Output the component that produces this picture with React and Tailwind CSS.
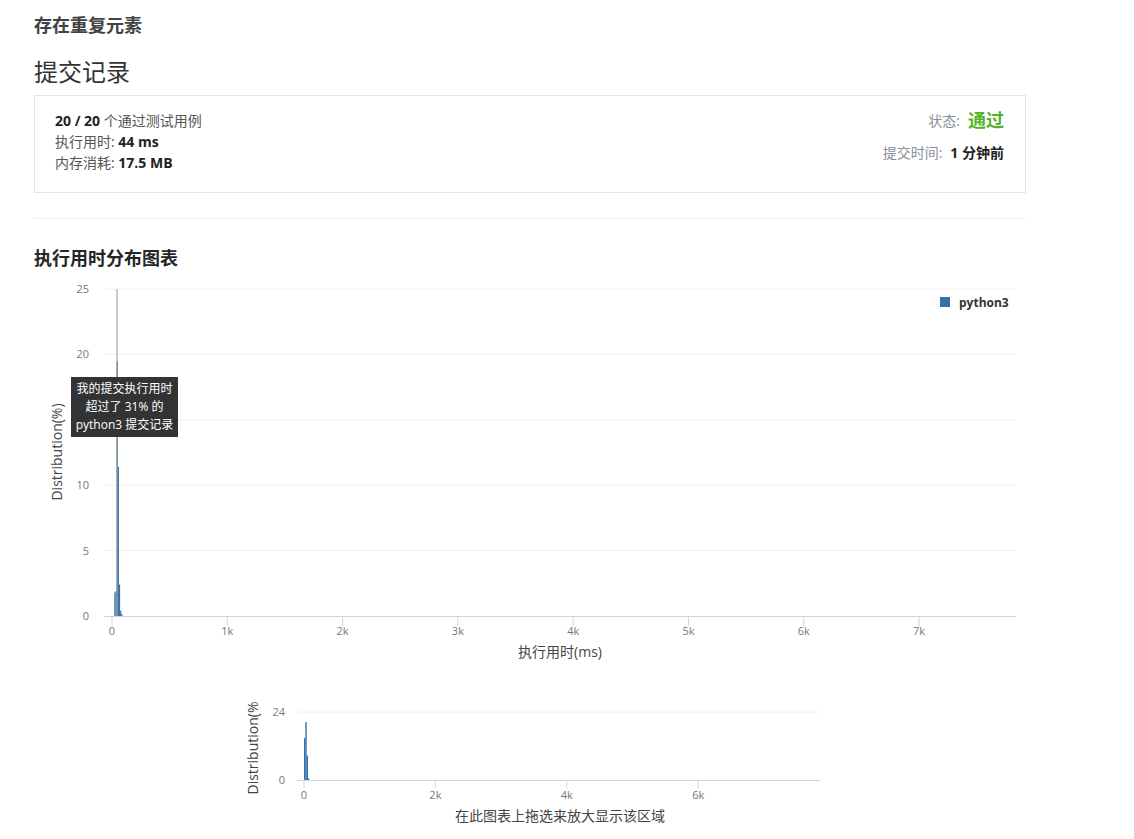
import React from "react";

const FONT = { fontFamily: '"Open Sans", "Noto Sans CJK SC", sans-serif' };
const BAR = "#3572a5";

// main chart scale: 0ms at x=112, 115.3px per 1000ms; 0% at y=616, 13.08px per 1%
const mx = (ms) => 112 + ms * 0.1153;
const my = (v) => 616 - v * 13.08;
// mini chart scale
const sx = (ms) => 304 + ms * 0.0657;
const sy = (v) => 780 - v * 2.83;

const bins = [
  [20, 1.8],
  [30, 1.9],
  [40, 19.5],
  [50, 11.4],
  [60, 2.4],
  [70, 0.4],
  [80, 0.15],
];

const miniBins = [
  [0, 14.8],
  [20, 20.5],
  [40, 8.6],
  [60, 0.5],
];

function MainChart() {
  const yTicks = [0, 5, 10, 15, 20, 25];
  const xTicks = [0, 1, 2, 3, 4, 5, 6, 7];
  return (
    <div className="relative mt-[10px] h-[390px] w-[992px]">
      <svg width="992" height="390" style={FONT}>
        <g transform="translate(-34,-280)">
          {yTicks.map((t) =>
            t === 0 ? null : (
              <line key={t} x1="104" x2="1016" y1={my(t)} y2={my(t)} stroke="#f0f0f0" />
            )
          )}
          {yTicks.map((t) => (
            <text key={t} x="89" y={my(t) + 4} textAnchor="end" fontSize="11" fill="#777">
              {t}
            </text>
          ))}
          <line x1="104" x2="1016" y1="616.5" y2="616.5" stroke="#ccd6eb" />
          {xTicks.map((t) => (
            <g key={t}>
              <line x1={mx(t * 1000)} x2={mx(t * 1000)} y1="616" y2="626" stroke="#ccd6eb" />
              <text x={mx(t * 1000)} y="635" textAnchor="middle" fontSize="11" fill="#777">
                {t === 0 ? "0" : `${t}k`}
              </text>
            </g>
          ))}
          {bins.map(([ms, v]) => (
            <rect key={ms} x={mx(ms)} y={my(v)} width="1.2" height={616 - my(v)} fill={BAR} />
          ))}
          <line x1="117" x2="117" y1="289" y2="616" stroke="#999" />
          <text x="560" y="657" textAnchor="middle" fontSize="14" fill="#444">
            执行用时(ms)
          </text>
          <text
            x="0"
            y="0"
            transform="translate(62,452) rotate(-90)"
            textAnchor="middle"
            fontSize="14"
            fill="#444"
          >
            Distribution(%)
          </text>
          <rect x="940" y="297" width="10" height="10" fill={BAR} />
          <text x="959" y="307" fontSize="12" fontWeight="bold" fill="#333">
            python3
          </text>
        </g>
      </svg>
      {/* tooltip for my submission */}
      <div className="absolute left-[37px] top-[97px] flex w-[107px] flex-col items-center bg-[#333333] py-[3px] text-[12px] leading-[18px] text-white">
        <span>我的提交执行用时</span>
        <span>超过了 31% 的</span>
        <span>python3 提交记录</span>
      </div>
    </div>
  );
}

function MiniChart() {
  const xTicks = [0, 2, 4, 6];
  return (
    <div className="mt-[20px] h-[149px] w-[992px]">
      <svg width="992" height="149" style={FONT}>
        <g transform="translate(-34,-690)">
          <line x1="297" x2="820" y1="712" y2="712" stroke="#f0f0f0" />
          <text x="285" y="716" textAnchor="end" fontSize="11" fill="#777">
            24
          </text>
          <text x="285" y="784" textAnchor="end" fontSize="11" fill="#777">
            0
          </text>
          {miniBins.map(([ms, v]) => (
            <rect key={ms} x={sx(ms)} y={sy(v)} width="1.4" height={780 - sy(v)} fill={BAR} />
          ))}
          <line x1="297" x2="820" y1="780.5" y2="780.5" stroke="#ccd6eb" />
          {xTicks.map((t) => (
            <g key={t}>
              <line x1={sx(t * 1000)} x2={sx(t * 1000)} y1="780" y2="788" stroke="#ccd6eb" />
              <text x={sx(t * 1000)} y="799" textAnchor="middle" fontSize="11" fill="#777">
                {t === 0 ? "0" : `${t}k`}
              </text>
            </g>
          ))}
          <text
            x="0"
            y="0"
            transform="translate(258,748) rotate(-90)"
            textAnchor="middle"
            fontSize="14"
            fill="#444"
          >
            Distribution(%
          </text>
          <text x="560" y="821" textAnchor="middle" fontSize="14" fill="#444">
            在此图表上拖选来放大显示该区域
          </text>
        </g>
      </svg>
    </div>
  );
}

export default function App() {
  return (
    <div className="min-h-[839px] bg-white pl-[34px] pt-[13px] text-[#333]" style={FONT}>
      <h1 className="h-[24px] text-[18px] font-bold leading-[24px] text-[#424242]">存在重复元素</h1>
      <h2 className="mt-[18px] h-[34px] text-[24px] leading-[34px] text-[#333]">提交记录</h2>

      <div className="mt-[6px] flex h-[98px] w-[992px] justify-between border border-[#e5e5e5] pb-[19px] pl-[20px] pr-[21px] pt-[14px] text-[14px] leading-[21px]">
        <div className="flex flex-col">
          <div>
            <span className="font-bold text-[#222]">20 / 20</span>{" "}
            <span className="text-[#555]">个通过测试用例</span>
          </div>
          <div className="text-[#555]">
            执行用时: <span className="font-bold text-[#222]">44 ms</span>
          </div>
          <div className="text-[#555]">
            内存消耗: <span className="font-bold text-[#222]">17.5 MB</span>
          </div>
        </div>
        <div className="flex flex-col items-end">
          <div className="flex h-[21px] items-center">
            <span className="text-[#8a9099]">状态:</span>
            <span className="ml-[8px] text-[18px] font-bold text-[#56b22a]">通过</span>
          </div>
          <div className="mt-[11px]">
            <span className="text-[#8a9099]">提交时间:</span>
            <span className="ml-[8px] font-bold text-[#222]">1 分钟前</span>
          </div>
        </div>
      </div>

      <div className="mt-[25px] h-px w-[992px] bg-[#eeeeee]" />

      <h3 className="mt-[27px] h-[24px] text-[18px] font-bold leading-[24px] text-[#262626]">执行用时分布图表</h3>

      <MainChart />
      <MiniChart />
    </div>
  );
}
